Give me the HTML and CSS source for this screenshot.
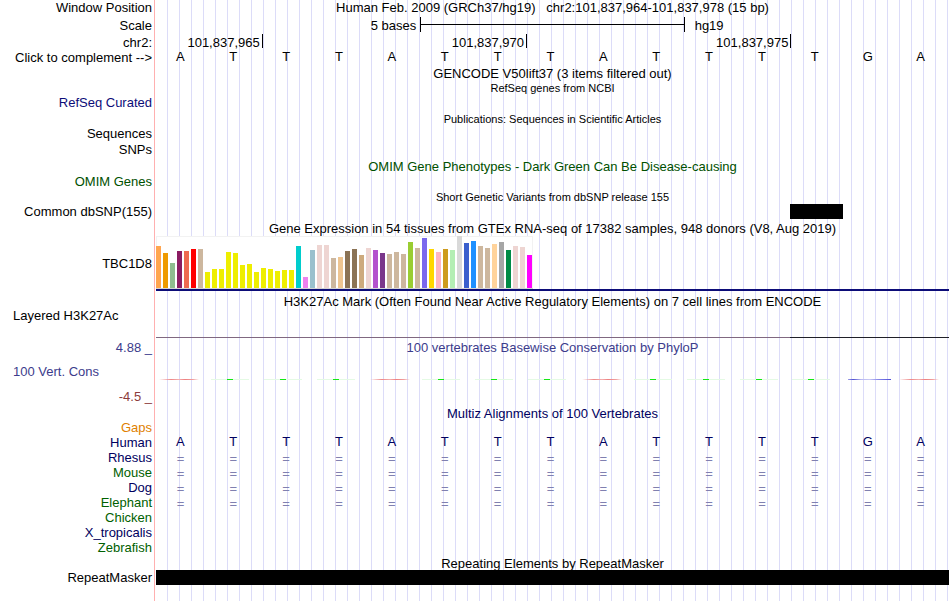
FILE: index.html
```html
<!DOCTYPE html>
<html lang="en">
<head>
<meta charset="utf-8">
<title>chr2:101,837,964-101,837,978</title>
<link rel="stylesheet" href="styles.css">
</head>
<body>
<main class="browser">
  <div class="row position"><div class="label">Window Position</div><div class="title">Human Feb. 2009 (GRCh37/hg19) &nbsp; chr2:101,837,964-101,837,978 (15 bp)</div></div>
  <div class="row medium"><div class="label">Scale</div>
    <div class="columns scale"><span class="scale-size">5 bases</span><span class="scale-bar"></span><span class="scale-name">hg19</span></div></div>
  <div class="row tall"><div class="label">chr2:</div>
    <div class="columns ruler"><span class="tick tick-a">101,837,965</span><span class="tick tick-b">101,837,970</span><span class="tick tick-b">101,837,975</span></div></div>
  <div class="row"><button class="label" type="button">Click to complement --&gt;</button><div class="bases sequence"></div></div>

  <div class="row medium"><div class="label"></div><div class="title">GENCODE V50lift37 (3 items filtered out)</div></div>
  <div class="row"><div class="label"></div><div class="title small">RefSeq genes from NCBI</div></div>
  <div class="row short"><div class="label blue">RefSeq Curated</div></div>

  <div class="row gap-above"><div class="label"></div><div class="title small">Publications: Sequences in Scientific Articles</div></div>
  <div class="row short"><div class="label">Sequences</div></div>
  <div class="row medium"><div class="label">SNPs</div></div>

  <div class="row gap-above"><div class="label"></div><div class="title omim">OMIM Gene Phenotypes - Dark Green Can Be Disease-causing</div></div>
  <div class="row"><div class="label omim">OMIM Genes</div></div>

  <div class="row low"><div class="label"></div><div class="title small">Short Genetic Variants from dbSNP release 155</div></div>
  <div class="row"><div class="label">Common dbSNP(155)</div><div class="columns"><span class="variant"></span></div></div>

  <div class="row gap-above"><div class="label"></div><div class="title">Gene Expression in 54 tissues from GTEx RNA-seq of 17382 samples, 948 donors (V8, Aug 2019)</div></div>
  <div class="row expression"><div class="label">TBC1D8</div><div class="gene"><div class="bars" id="bars"></div></div></div>

  <div class="row gap-above low"><div class="label"></div><div class="title">H3K27Ac Mark (Often Found Near Active Regulatory Elements) on 7 cell lines from ENCODE</div></div>
  <div class="row histone"><div class="label start">Layered H3K27Ac</div><div class="histone-line"></div></div>

  <div class="row gap-above"><div class="label cons">4.88 _</div><div class="title cons">100 vertebrates Basewise Conservation by PhyloP</div></div>
  <div class="row wiggle"><div class="label start cons">100 Vert. Cons</div><div class="bases" id="signal"></div></div>
  <div class="row"><div class="label negative">-4.5 _</div></div>

  <div class="row tall"><div class="label"></div><div class="title navy">Multiz Alignments of 100 Vertebrates</div></div>
  <div class="row short"><div class="label gaps">Gaps</div></div>
  <div class="row"><div class="label navy">Human</div><div class="bases sequence navy"></div></div>
  <div class="row"><div class="label navy">Rhesus</div><div class="bases aligned"></div></div>
  <div class="row"><div class="label green">Mouse</div><div class="bases aligned"></div></div>
  <div class="row"><div class="label navy">Dog</div><div class="bases aligned"></div></div>
  <div class="row"><div class="label green">Elephant</div><div class="bases aligned"></div></div>
  <div class="row"><div class="label green">Chicken</div></div>
  <div class="row"><div class="label navy">X_tropicalis</div></div>
  <div class="row"><div class="label green">Zebrafish</div></div>

  <div class="row low"><div class="label"></div><div class="title">Repeating Elements by RepeatMasker</div></div>
  <div class="row"><div class="label">RepeatMasker</div><div class="repeat"></div></div>
</main>
<script src="script.js"></script>
</body>
</html>
```
FILE: styles.css
```css
* { box-sizing: border-box; }

body {
  margin: 0;
  background: #fff;
  color: #000;
  font: 13px/15px "Liberation Sans", Arial, sans-serif;
}

/* Pink rule beside the labels, guide lines every 12px over the tracks. */
.browser {
  min-height: 100vh;
  padding-right: 1px;
  background:
    linear-gradient(#ffb0b0, #ffb0b0) 154px 0 / 1px 100% no-repeat,
    repeating-linear-gradient(to right, transparent 0 11px, #dcdcf8 11px 12px) 156px 0 no-repeat;
}

.row {
  display: grid;
  grid-template-columns: 152px minmax(0, 1fr);
  column-gap: 4px;
  height: 15px;
  white-space: nowrap;
}
.position { height: 17px; line-height: 16px; }
.short { height: 14px; line-height: 13px; }
.medium { height: 16px; line-height: 18px; }
.tall { height: 17px; line-height: 19px; }
.low { line-height: 17px; }
.gap-above { margin-top: 2px; }

.label { text-align: right; }
.start { text-align: left; padding-left: 13px; }
button.label {
  border: 0;
  padding: 0;
  background: none;
  color: inherit;
  font: inherit;
  cursor: pointer;
}

.title { text-align: center; }
.small { font-size: 11px; }

.blue { color: #0c0c78; }
.navy { color: #000060; }
.green { color: #006000; }
.omim { color: #005000; }
.cons { color: #3c3c8c; }
.negative { color: #8c3c3c; }
.gaps { color: #e08000; }

.columns, .bases {
  display: grid;
  grid-template-columns: repeat(15, minmax(0, 1fr));
}
.bases { margin: 0 2px 0 -2px; text-align: center; }
.aligned { color: #8080b0; line-height: 17px; }
.sequence { line-height: 14px; }

.scale-size { grid-column: 1 / 6; text-align: right; padding-right: 4px; }
.scale-bar {
  grid-column: 6 / 11;
  height: 15px;
  border: solid #000;
  border-width: 0 1px;
  background: linear-gradient(#000, #000) 0 7px / 100% 1px no-repeat;
}
.scale-name { grid-column: 11 / 16; padding-left: 10px; }

.ruler { padding-top: 1px; line-height: 17px; }
.tick {
  height: 14px;
  margin-right: -1px;
  padding-right: 2px;
  border-right: 1px solid #000;
  text-align: right;
}
.tick-a { grid-column: span 2; }
.tick-b { grid-column: span 5; }

.variant { grid-column: 13; background: #000; }

.expression { height: 55px; line-height: 55px; }
.gene { border-bottom: 2px solid #0c0c78; }
.bars {
  display: flex;
  align-items: flex-end;
  gap: 2px;
  width: max-content;
  height: 53px;
  padding-right: 1px;
  background: #fff;
  border-bottom: 1px solid #d3d3d3;
  box-shadow: inset 0 1px #f2f2f2, inset 1px 0 #f2f2f2, inset -1px 0 #f2f2f2;
}
.bars i { width: 5px; }

.histone { height: 30px; }
.histone-line {
  align-self: end;
  height: 1px;
  background: linear-gradient(to right, #806880 80%, #202028 80%);
}

.wiggle { height: 34px; line-height: 33px; }
.signal { height: 1px; margin-top: 24px; background-repeat: no-repeat; }
.signal-a {
  background-image: linear-gradient(to right, transparent, #ee8888 30%, #f4b0b0 50%, #ee8080 65%, #f0a0a0 85%, transparent);
  background-size: 40px 1px;
  background-position: 5px 0;
}
.signal-t {
  background-image: linear-gradient(to right, #e4fae4 0 16px, #14e814 16px 22px, #e4fae4 22px);
  background-size: 38px 1px;
  background-position: 4px 0;
}
.signal-g {
  background-image: linear-gradient(to right, #a0a0e8, #5050d0 12%, #b8b8f0 30%, #c8c8f4 50%, #8888e8 70%, #5050d8);
  background-size: 43px 1px;
  background-position: 7px 0;
}

.repeat { background: #000; }
```
FILE: script.js
```js
const sequence = "ATTTATTTATTTTGA";

function fill(node, makeCell) {
  for (const base of sequence) node.append(makeCell(base));
}

function cell(text, className) {
  const span = document.createElement("span");
  span.textContent = text;
  if (className) span.className = className;
  return span;
}

document.querySelectorAll(".sequence").forEach(n => fill(n, b => cell(b)));
document.querySelectorAll(".aligned").forEach(n => fill(n, () => cell("=")));
fill(document.getElementById("signal"), b => cell("", "signal signal-" + b.toLowerCase()));

// Median expression per tissue: [bar height, tissue colour]
const tissues = [
  [42, "#ffa54f"], [35, "#ee9a00"], [25, "#8fbc8f"], [37, "#8b1c62"], [37, "#ee6a50"], [39, "#ff0000"],
  [39, "#cdb79e"], [16, "#eeee00"], [19, "#eeee00"], [19, "#eeee00"], [36, "#eeee00"], [35, "#eeee00"],
  [23, "#eeee00"], [24, "#eeee00"], [16, "#eeee00"], [20, "#eeee00"], [19, "#eeee00"], [17, "#eeee00"],
  [18, "#eeee00"], [18, "#eeee00"], [42, "#00cdcd"], [11, "#ee82ee"], [38, "#9ac0cd"], [43, "#eed5d2"],
  [43, "#eed5d2"], [30, "#cdb79e"], [31, "#eec591"], [37, "#8b7355"], [39, "#8b7355"], [33, "#cdaa7d"],
  [40, "#eed5d2"], [38, "#b452cd"], [35, "#7a378b"], [34, "#cdb79e"], [36, "#cdb79e"], [34, "#cdb79e"],
  [46, "#9acd32"], [40, "#cdb79e"], [50, "#7b68ee"], [39, "#ffd700"], [36, "#ffb6c1"], [39, "#cd9b1d"],
  [38, "#b4eeb4"], [52, "#d9d9d9"], [45, "#3a5fcd"], [47, "#1e90ff"], [42, "#cdb79e"], [40, "#cdb79e"],
  [44, "#ffd39b"], [46, "#a6a6a6"], [38, "#008b45"], [42, "#eed5d2"], [41, "#eed5d2"], [33, "#ff00ff"]
];
const bars = document.getElementById("bars");
for (const [height, colour] of tissues) {
  const bar = document.createElement("i");
  bar.style.height = height + "px";
  bar.style.background = colour;
  bars.append(bar);
}
```
